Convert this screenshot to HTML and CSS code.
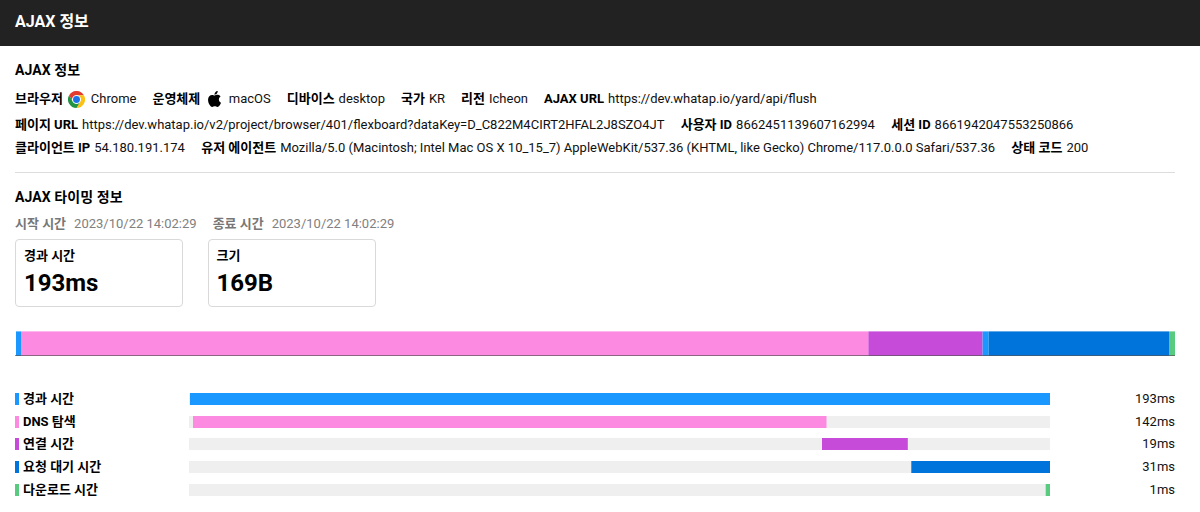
FILE: index.html
```html
<!DOCTYPE html>
<html lang="ko">
<head>
<meta charset="utf-8">
<title>AJAX 정보</title>
<link rel="stylesheet" href="styles.css">
</head>
<body>
<header class="topbar">AJAX 정보</header>
<main class="content">
  <section class="info">
    <h2 class="title">AJAX 정보</h2>
    <div class="row row-icons">
      <div class="item"><b>브라우저</b>
        <svg class="icon chrome" viewBox="0 0 48 48"><circle cx="24" cy="24" r="23" fill="#fff"/><path fill="#e33b2e" d="M3.2 12A24 24 0 0 1 44.8 12H24a12 12 0 0 0-10.4 18z"/><path fill="#fbc116" d="M44.8 12A24 24 0 0 1 24 48l10.4-18A12 12 0 0 0 24 12z"/><path fill="#229342" d="M24 48A24 24 0 0 1 3.2 12l10.4 18a12 12 0 0 0 20.8 0z"/><circle cx="24" cy="24" r="12" fill="#fff"/><circle cx="24" cy="24" r="9.8" fill="#1a73e8"/></svg>
        <span>Chrome</span></div>
      <div class="item"><b>운영체제</b>
        <svg class="icon apple" viewBox="0 0 814 1000"><path d="M788 341c-6 4-108 62-108 190 0 149 130 201 134 203-1 3-21 72-69 142-42 61-87 123-154 123s-85-39-163-39c-76 0-103 40-165 40s-105-57-155-127C50 791 3 663 3 541c0-194 126-297 251-297 66 0 121 43 163 43 39 0 101-46 176-46 29 0 131 3 195 100zM555 159c31-37 53-88 53-139 0-7-1-14-2-20-50 2-110 34-146 76-28 32-55 83-55 135 0 8 1 16 2 18 3 1 8 1 13 1 45 0 102-30 135-71z"/></svg>
        <span>macOS</span></div>
      <div class="item"><b>디바이스</b><span>desktop</span></div>
      <div class="item"><b>국가</b><span>KR</span></div>
      <div class="item"><b>리전</b><span>Icheon</span></div>
      <div class="item"><b>AJAX URL</b><span>https://dev.whatap.io/yard/api/flush</span></div>
    </div>
    <div class="row row-page">
      <div class="item"><b>페이지 URL</b><span>https://dev.whatap.io/v2/project/browser/401/flexboard?dataKey=D_C822M4CIRT2HFAL2J8SZO4JT</span></div>
      <div class="item"><b>사용자 ID</b><span>8662451139607162994</span></div>
      <div class="item"><b>세션 ID</b><span>8661942047553250866</span></div>
    </div>
    <div class="row row-client">
      <div class="item"><b>클라이언트 IP</b><span>54.180.191.174</span></div>
      <div class="item"><b>유저 에이전트</b><span>Mozilla/5.0 (Macintosh; Intel Mac OS X 10_15_7) AppleWebKit/537.36 (KHTML, like Gecko) Chrome/117.0.0.0 Safari/537.36</span></div>
      <div class="item"><b>상태 코드</b><span>200</span></div>
    </div>
  </section>
  <section class="timing">
    <h2 class="title">AJAX 타이밍 정보</h2>
    <div class="times">
      <div class="time"><b>시작 시간</b><span>2023/10/22 14:02:29</span></div>
      <div class="time"><b>종료 시간</b><span>2023/10/22 14:02:29</span></div>
    </div>
    <div class="cards">
      <div class="card"><b class="card-label">경과 시간</b><strong class="card-value">193ms</strong></div>
      <div class="card"><b class="card-label">크기</b><strong class="card-value">169B</strong></div>
    </div>
    <svg class="stack" viewBox="0 0 1160 25" shape-rendering="geometricPrecision">
      <rect class="c-total" x="1" y=".4" width="5" height="24.2"/>
      <rect class="c-dns" x="6" y=".4" width="847.5" height="24.2"/>
      <rect class="c-conn" x="853.4" y=".4" width="114.2" height="24.2"/>
      <rect class="c-total" x="967.6" y=".4" width="6" height="24.2"/>
      <rect class="c-wait" x="973.6" y=".4" width="180.4" height="24.2"/>
      <rect class="c-down" x="1154" y=".4" width="6" height="24.2"/>
      <rect class="axis" x="0" y="24" width="1160" height="1"/>
    </svg>
    <div class="bars">
      <div class="bar"><i class="mark c-total"></i><b class="name">경과 시간</b><svg class="track"><rect class="c-total" x="1" y="0" width="860" height="12"/></svg><span class="value">193ms</span></div>
      <div class="bar"><i class="mark c-dns"></i><b class="name">DNS 탐색</b><svg class="track"><rect class="c-dns" x="4" y="0" width="633.5" height="12"/></svg><span class="value">142ms</span></div>
      <div class="bar"><i class="mark c-conn"></i><b class="name">연결 시간</b><svg class="track"><rect class="c-conn" x="633" y="0" width="85.8" height="12"/></svg><span class="value">19ms</span></div>
      <div class="bar"><i class="mark c-wait"></i><b class="name">요청 대기 시간</b><svg class="track"><rect class="c-wait" x="722.3" y="0" width="138.7" height="12"/></svg><span class="value">31ms</span></div>
      <div class="bar"><i class="mark c-down"></i><b class="name">다운로드 시간</b><svg class="track"><rect class="c-down" x="856.7" y="0" width="4.3" height="12"/></svg><span class="value">1ms</span></div>
    </div>
  </section>
</main>
</body>
</html>
```

FILE: styles.css
```css
* { box-sizing: border-box; }
body {
  margin: 0;
  height: 512px;
  overflow: hidden;
  background: #fff;
  color: #111;
  font: 13px/20px Roboto, "Noto Sans CJK KR", sans-serif;
}
b { font-weight: 700; color: #000; }
.topbar {
  height: 46px;
  padding-left: 15px;
  background: #222;
  color: #fff;
  font-size: 16px;
  font-weight: 700;
  line-height: 44px;
}
.content { padding: 14px 25px 0 15px; }
.title {
  margin: 0;
  font-size: 14px;
  font-weight: 700;
  line-height: 20px;
  letter-spacing: .08px;
  color: #000;
}
.info {
  height: 113px;
  border-bottom: 1px solid #ddd;
}
.row {
  display: flex;
  align-items: center;
  gap: 16.3px;
  height: 24px;
  white-space: nowrap;
}
.row-icons { height: 28px; margin-top: 5px; gap: 16px; }
.row-client { height: 22px; }
.item { display: flex; align-items: center; gap: 4px; }
.icon { flex: none; }
.chrome { width: 17px; height: 17px; margin: 0 1.5px; }
.apple { width: 13px; height: 16px; margin: 0 4px 0 3.5px; }
.timing { padding-top: 14px; }
.times {
  display: flex;
  gap: 16px;
  margin-top: 7px;
  color: #808080;
}
.time { display: flex; gap: 8px; }
.time b { color: #777; }
.cards { display: flex; gap: 24.5px; margin-top: 5px; }
.card {
  display: flex;
  flex-direction: column;
  width: 168px;
  height: 68px;
  padding: 6px 8px;
  border: 1px solid #d9d9d9;
  border-radius: 4px;
}
.card-label { line-height: 20px; }
.card-value { color: #000; font-size: 24px; line-height: 34px; }
.stack {
  display: block;
  width: 1160px;
  height: 25px;
  margin-top: 24px;
}
.bars { margin-top: 32px; }
.bar {
  display: flex;
  align-items: center;
  height: 22.6px;
}
.mark { width: 4px; height: 12px; margin-right: 4px; }
.name { width: 166px; }
.track { width: 861px; height: 12px; background: #efefef; }
.value { flex: 1; text-align: right; }
.c-total { background-color: #1a98ff; fill: #1a98ff; }
.c-dns { background-color: #fc8ae1; fill: #fc8ae1; }
.c-conn { background-color: #c64bd9; fill: #c64bd9; }
.c-wait { background-color: #0074db; fill: #0074db; }
.c-down { background-color: #58cb80; fill: #58cb80; }
.axis { fill: #000; fill-opacity: .45; }
```
